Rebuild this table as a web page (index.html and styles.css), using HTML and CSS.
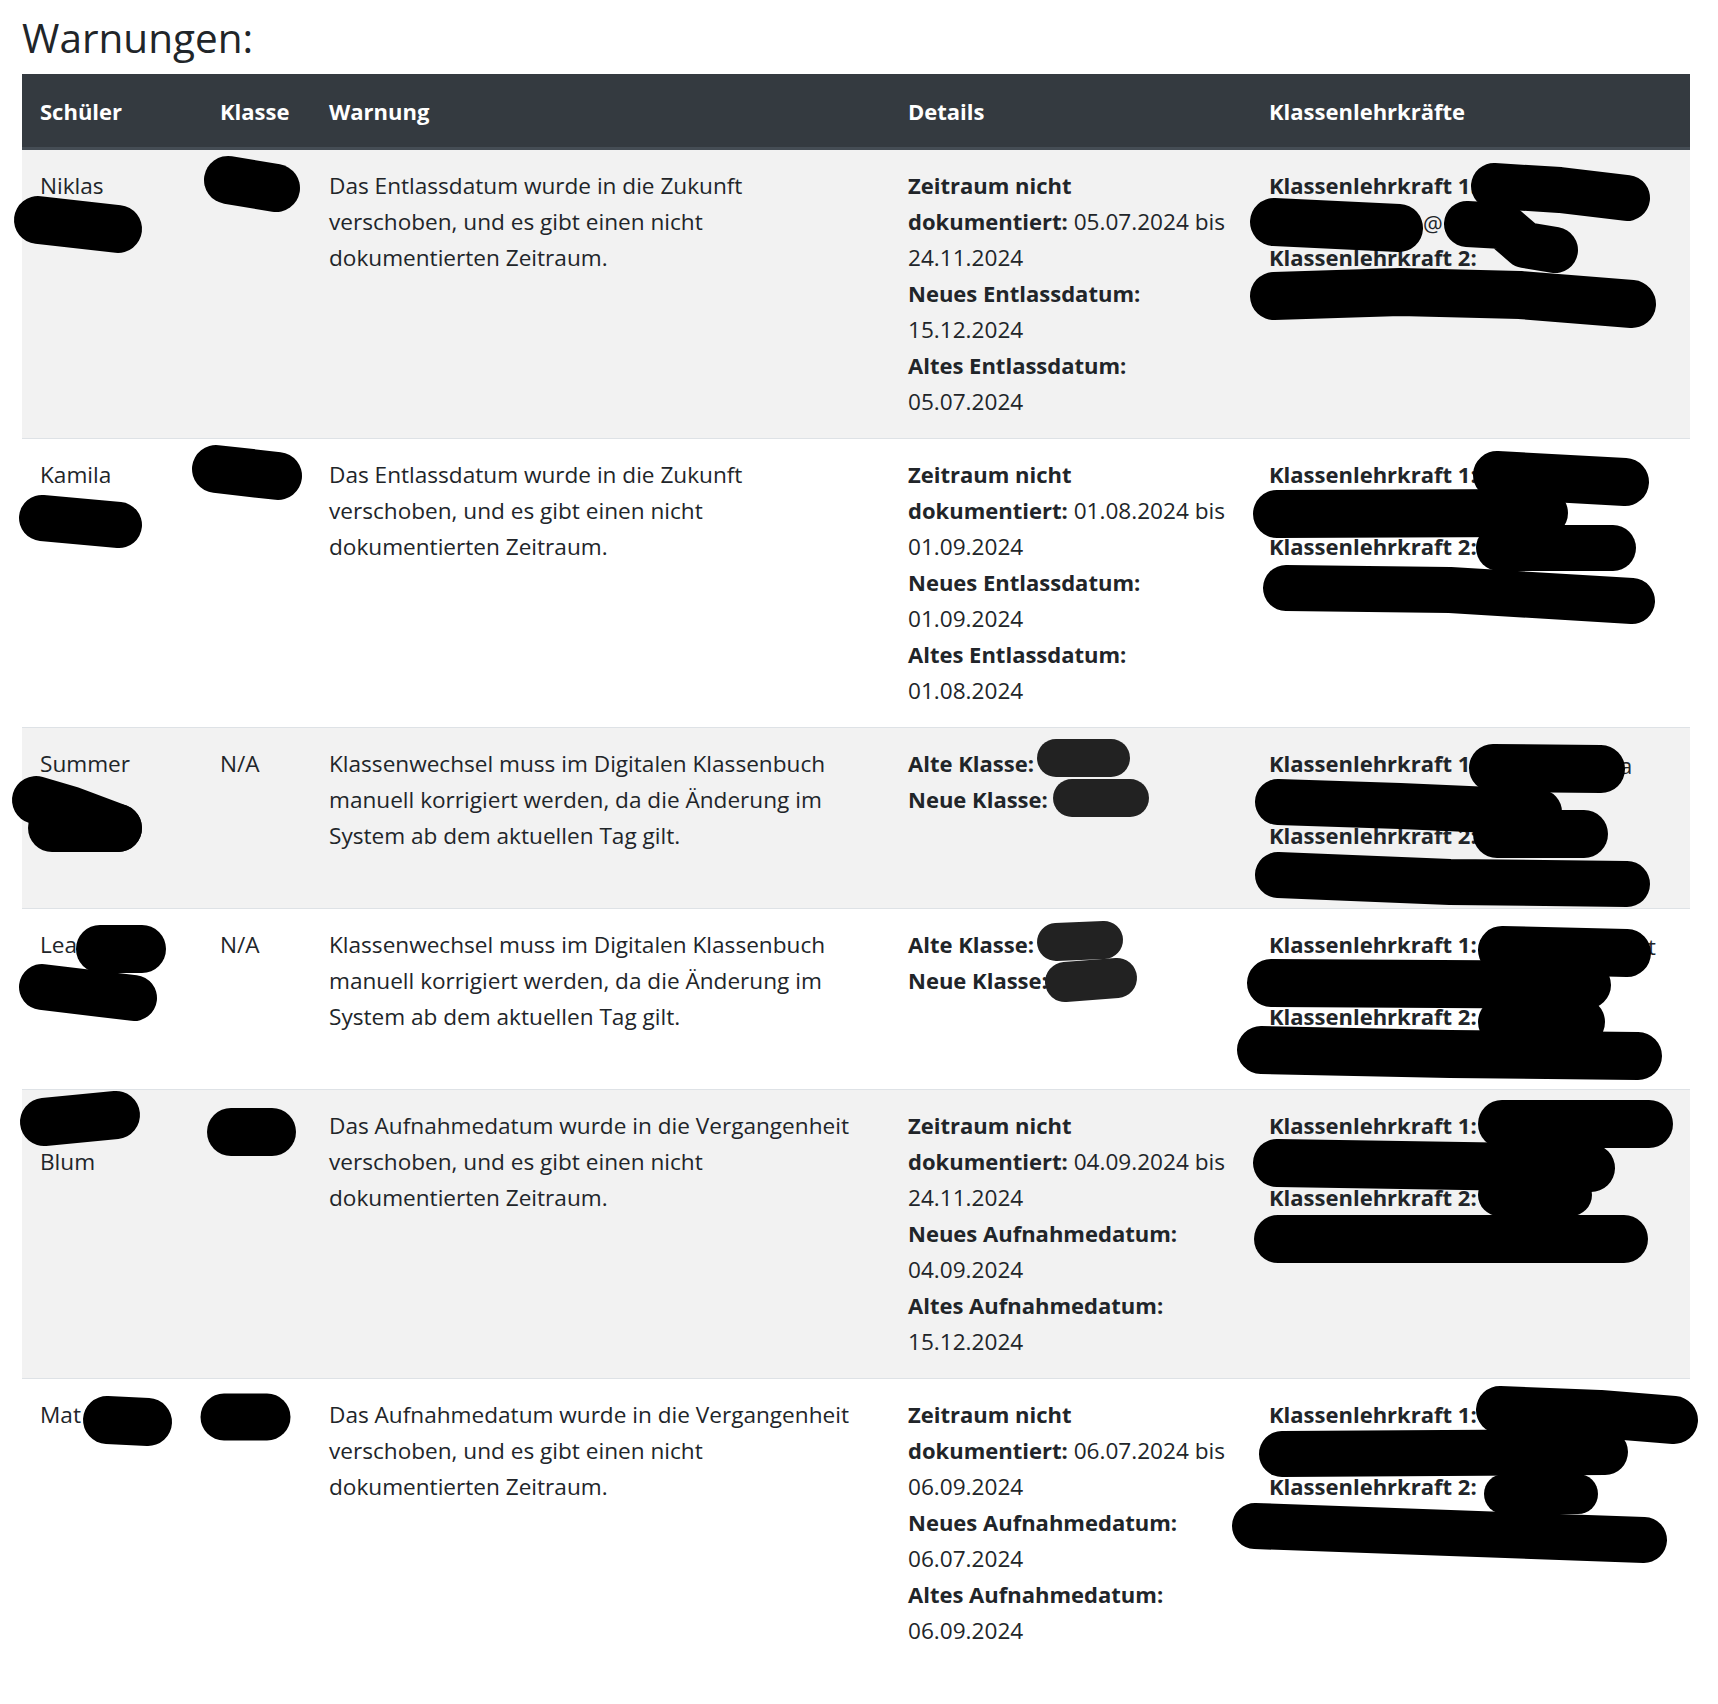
FILE: index.html
```html
<!DOCTYPE html>
<html lang="de">
<head>
<meta charset="utf-8">
<title>Warnungen</title>
<link rel="stylesheet" href="styles.css">
</head>
<body>
<div class="page">
  <h3 class="title">Warnungen:</h3>
  <table class="warn-table">
    <thead>
      <tr>
        <th class="c-student">Schüler</th>
        <th class="c-class">Klasse</th>
        <th class="c-warn">Warnung</th>
        <th class="c-details">Details</th>
        <th class="c-teachers">Klassenlehrkräfte</th>
      </tr>
    </thead>
    <tbody>
      <tr>
        <td>Niklas<br>&nbsp;</td>
        <td></td>
        <td class="warn">Das Entlassdatum wurde in die Zukunft verschoben, und es gibt einen nicht dokumentierten Zeitraum.</td>
        <td class="details">
          <div><b>Zeitraum nicht dokumentiert:</b> 05.07.2024 bis 24.11.2024</div>
          <div><b>Neues Entlassdatum:</b> 15.12.2024</div>
          <div><b>Altes Entlassdatum:</b> 05.07.2024</div>
        </td>
        <td class="teachers">
          <div><b>Klassenlehrkraft 1:</b></div><div>&nbsp;</div>
          <div><b>Klassenlehrkraft 2:</b></div><div>&nbsp;</div>
        </td>
      </tr>
      <tr>
        <td>Kamila<br>&nbsp;</td>
        <td></td>
        <td class="warn">Das Entlassdatum wurde in die Zukunft verschoben, und es gibt einen nicht dokumentierten Zeitraum.</td>
        <td class="details">
          <div><b>Zeitraum nicht dokumentiert:</b> 01.08.2024 bis 01.09.2024</div>
          <div><b>Neues Entlassdatum:</b> 01.09.2024</div>
          <div><b>Altes Entlassdatum:</b> 01.08.2024</div>
        </td>
        <td class="teachers">
          <div><b>Klassenlehrkraft 1:</b></div><div>&nbsp;</div>
          <div><b>Klassenlehrkraft 2:</b></div><div>&nbsp;</div>
        </td>
      </tr>
      <tr>
        <td>Summer<br>&nbsp;</td>
        <td>N/A</td>
        <td class="warn">Klassenwechsel muss im Digitalen Klassenbuch manuell korrigiert werden, da die Änderung im System ab dem aktuellen Tag gilt.</td>
        <td class="details">
          <div><b>Alte Klasse:</b></div>
          <div><b>Neue Klasse:</b></div>
        </td>
        <td class="teachers">
          <div><b>Klassenlehrkraft 1:</b></div><div>&nbsp;</div>
          <div><b>Klassenlehrkraft 2:</b></div><div>&nbsp;</div>
        </td>
      </tr>
      <tr>
        <td>Lea<br>&nbsp;</td>
        <td>N/A</td>
        <td class="warn">Klassenwechsel muss im Digitalen Klassenbuch manuell korrigiert werden, da die Änderung im System ab dem aktuellen Tag gilt.</td>
        <td class="details">
          <div><b>Alte Klasse:</b></div>
          <div><b>Neue Klasse:</b></div>
        </td>
        <td class="teachers">
          <div><b>Klassenlehrkraft 1:</b></div><div>&nbsp;</div>
          <div><b>Klassenlehrkraft 2:</b></div><div>&nbsp;</div>
        </td>
      </tr>
      <tr>
        <td>&nbsp;<br>Blum</td>
        <td></td>
        <td class="warn">Das Aufnahmedatum wurde in die Vergangenheit verschoben, und es gibt einen nicht dokumentierten Zeitraum.</td>
        <td class="details">
          <div><b>Zeitraum nicht dokumentiert:</b> 04.09.2024 bis 24.11.2024</div>
          <div><b>Neues Aufnahmedatum:</b> 04.09.2024</div>
          <div><b>Altes Aufnahmedatum:</b> 15.12.2024</div>
        </td>
        <td class="teachers">
          <div><b>Klassenlehrkraft 1:</b></div><div>&nbsp;</div>
          <div><b>Klassenlehrkraft 2:</b></div><div>&nbsp;</div>
        </td>
      </tr>
      <tr>
        <td>Mat</td>
        <td></td>
        <td class="warn">Das Aufnahmedatum wurde in die Vergangenheit verschoben, und es gibt einen nicht dokumentierten Zeitraum.</td>
        <td class="details">
          <div><b>Zeitraum nicht dokumentiert:</b> 06.07.2024 bis 06.09.2024</div>
          <div><b>Neues Aufnahmedatum:</b> 06.07.2024</div>
          <div><b>Altes Aufnahmedatum:</b> 06.09.2024</div>
        </td>
        <td class="teachers">
          <div><b>Klassenlehrkraft 1:</b></div><div>&nbsp;</div>
          <div><b>Klassenlehrkraft 2:</b></div><div>&nbsp;</div>
        </td>
      </tr>
    </tbody>
  </table>

  <svg class="redactions" width="1718" height="1704" viewBox="0 0 1718 1704" aria-hidden="true">
    <g class="fragments">
      <text x="1423" y="232">@</text>
      <text x="1620" y="774">a</text>
      <text x="1648" y="955">t</text>
    </g>
    <g class="marker">
      <path d="M38 220 L118 229" stroke-width="48"/>
      <path d="M228 180 L276 188" stroke-width="48"/>
      <path d="M42 518 L119 525" stroke-width="46"/>
      <path d="M216 469 L278 476" stroke-width="48"/>
      <path d="M36 800 L70 810 L118 828" stroke-width="48"/>
      <path d="M52 828 L118 828" stroke-width="48"/>
      <path d="M100 949 L142 949" stroke-width="48"/>
      <path d="M42 987 L134 998" stroke-width="46"/>
      <path d="M44 1122 L116 1115" stroke-width="48"/>
      <path d="M231 1132 L272 1132" stroke-width="48"/>
      <path d="M107 1420 L148 1422" stroke-width="48"/>
      <path d="M224 1417 L267 1417" stroke-width="47"/>

      <path d="M1494 186 L1560 190 L1627 198" stroke-width="46"/>
      <path d="M1274 222 L1399 228" stroke-width="48"/>
      <path d="M1467 224 L1503 226 L1525 245 L1555 250" stroke-width="46"/>
      <path d="M1274 296 L1400 292 L1520 295 L1632 304" stroke-width="48"/>

      <path d="M1497 475 L1625 482" stroke-width="48"/>
      <path d="M1277 514 L1544 513" stroke-width="48"/>
      <path d="M1499 548 L1613 548" stroke-width="46"/>
      <path d="M1286 588 L1450 590 L1632 601" stroke-width="46"/>

      <path d="M1493 768 L1601 769" stroke-width="48"/>
      <path d="M1278 802 L1400 806 L1539 812" stroke-width="46"/>
      <path d="M1497 834 L1584 834" stroke-width="48"/>
      <path d="M1278 875 L1450 882 L1627 884" stroke-width="46"/>

      <path d="M1502 950 L1627 953" stroke-width="48"/>
      <path d="M1271 983 L1587 985" stroke-width="48"/>
      <path d="M1502 1022 L1581 1022" stroke-width="48"/>
      <path d="M1261 1050 L1450 1054 L1638 1056" stroke-width="48"/>

      <path d="M1502 1124 L1649 1124" stroke-width="48"/>
      <path d="M1277 1163 L1591 1168" stroke-width="48"/>
      <path d="M1499 1195 L1571 1195" stroke-width="42"/>
      <path d="M1278 1239 L1624 1239" stroke-width="48"/>

      <path d="M1500 1410 L1600 1414 L1674 1420" stroke-width="48"/>
      <path d="M1282 1454 L1605 1452" stroke-width="46"/>
      <path d="M1504 1494 L1578 1494" stroke-width="40"/>
      <path d="M1255 1526 L1450 1533 L1644 1540" stroke-width="46"/>
    </g>
    <g class="marker marker-gray">
      <path d="M1056 758 L1111 758" stroke-width="38"/>
      <path d="M1072 798 L1130 798" stroke-width="38"/>
      <path d="M1056 942 L1104 940" stroke-width="38"/>
      <path d="M1065 982 L1117 978" stroke-width="40"/>
    </g>
  </svg>
</div>
</body>
</html>
```

FILE: styles.css
```css
html, body {
  margin: 0;
  padding: 0;
  background: #fff;
}

body {
  font-family: "Open Sans", "Noto Sans", sans-serif;
  font-size: 22px;
  line-height: 36px;
  color: #212529;
}

.page {
  position: relative;
  padding: 0 28px 40px 22px;
}

.title {
  margin: 0 0 11px 0;
  padding-top: 13px;
  font-size: 40.5px;
  line-height: 50px;
  font-weight: 500;
  color: #212529;
}

.warn-table {
  width: 1668px;
  border-collapse: collapse;
  table-layout: fixed;
}

.warn-table th,
.warn-table td {
  box-sizing: border-box;
  text-align: left;
  padding: 18px;
}

.warn-table th {
  background: #343a40;
  color: #fff;
  font-size: 22px;
  font-weight: 700;
  vertical-align: bottom;
  padding-top: 19px;
  padding-bottom: 18px;
  border-bottom: 3px solid #454d55;
}

.warn-table td {
  font-size: 22.6px;
  line-height: 36px;
  vertical-align: top;
  border-top: 1px solid #dee2e6;
}

.warn-table tbody tr:first-child td {
  border-top: none;
}

.warn-table tbody tr:nth-child(odd) td {
  background: #f2f2f2;
}

.c-student { width: 180px; }
.c-class { width: 109px; }
.c-warn { width: 579px; }
.c-details { width: 361px; }
.c-teachers { width: 439px; }

.warn-table td.warn {
  padding-right: 30px;
}

.details b,
.teachers b {
  font-size: 22px;
  line-height: 1;
  font-weight: 700;
}

.redactions {
  position: absolute;
  top: 0;
  left: 0;
  pointer-events: none;
}

.fragments text {
  font-family: "Open Sans", "Noto Sans", sans-serif;
  font-size: 22px;
  fill: #212529;
}

.marker path {
  fill: none;
  stroke: #000;
  stroke-linecap: round;
  stroke-linejoin: round;
}

.marker-gray path {
  stroke: #222;
}
```
